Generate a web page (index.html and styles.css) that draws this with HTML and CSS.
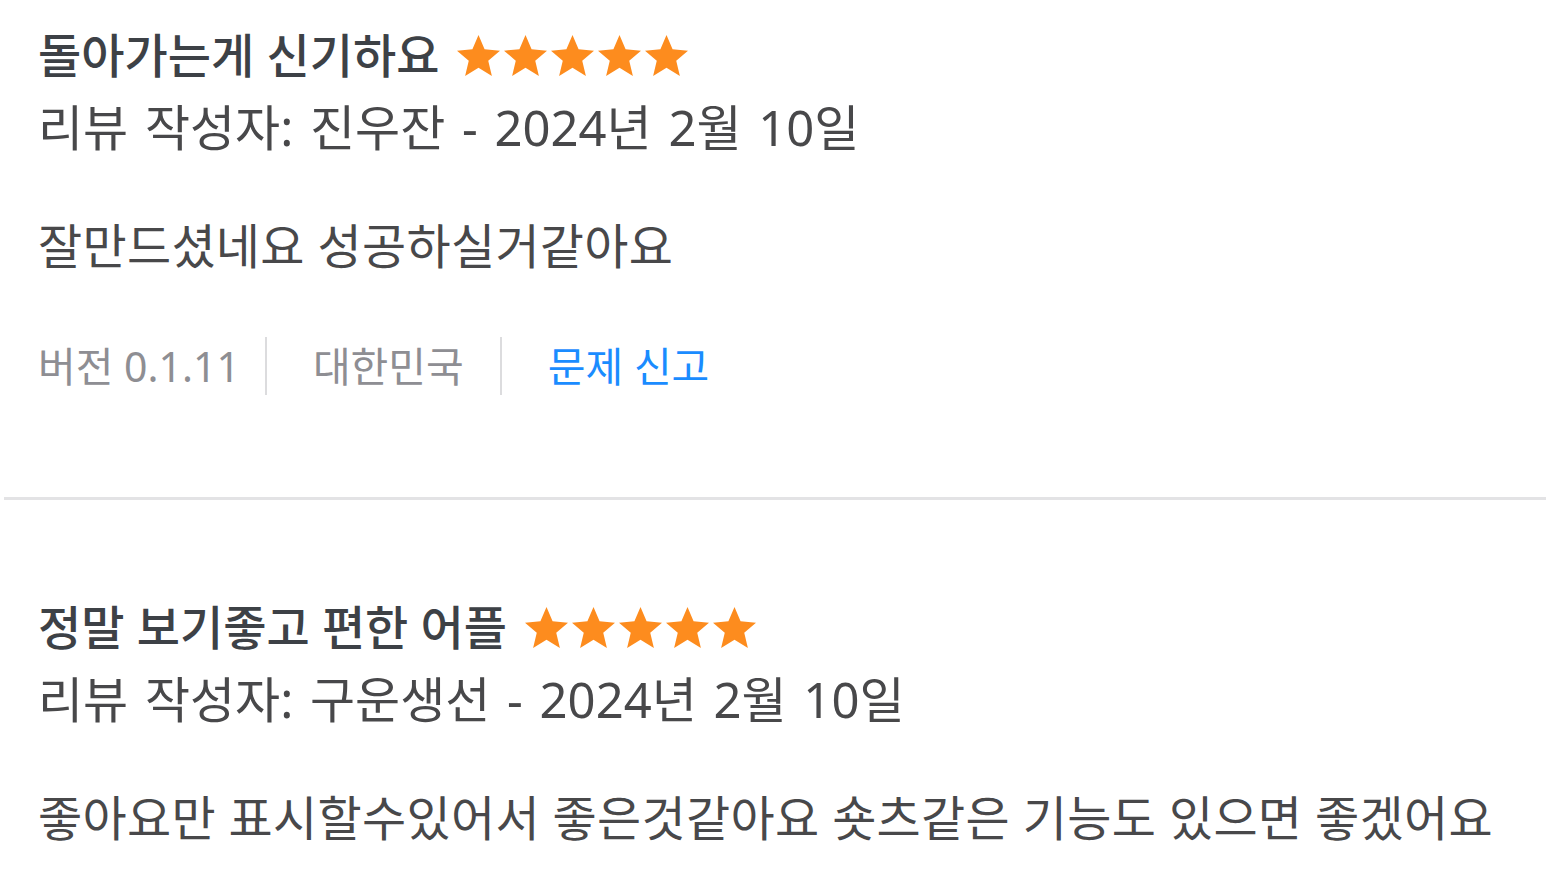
FILE: index.html
```html
<!DOCTYPE html>
<html lang="ko">
  <head>
    <meta charset="UTF-8" />
    <title>리뷰</title>
    <link rel="stylesheet" href="styles.css">
  </head>
  <body>
    <div class="reviews">
      <article class="review">
        <h2 class="review-title">
          돌아가는게 신기하요
          <span class="stars" aria-label="별점 5점">
            <svg viewBox="1.4 1.6 21.2 20.2"><path d="M12 1.6l3 7 7.6.7-5.8 5 1.8 7.5L12 17.8l-6.6 4 1.8-7.5-5.8-5 7.6-.7z"/></svg>
            <svg viewBox="1.4 1.6 21.2 20.2"><path d="M12 1.6l3 7 7.6.7-5.8 5 1.8 7.5L12 17.8l-6.6 4 1.8-7.5-5.8-5 7.6-.7z"/></svg>
            <svg viewBox="1.4 1.6 21.2 20.2"><path d="M12 1.6l3 7 7.6.7-5.8 5 1.8 7.5L12 17.8l-6.6 4 1.8-7.5-5.8-5 7.6-.7z"/></svg>
            <svg viewBox="1.4 1.6 21.2 20.2"><path d="M12 1.6l3 7 7.6.7-5.8 5 1.8 7.5L12 17.8l-6.6 4 1.8-7.5-5.8-5 7.6-.7z"/></svg>
            <svg viewBox="1.4 1.6 21.2 20.2"><path d="M12 1.6l3 7 7.6.7-5.8 5 1.8 7.5L12 17.8l-6.6 4 1.8-7.5-5.8-5 7.6-.7z"/></svg>
          </span>
        </h2>
        <p class="review-meta">리뷰 작성자: 진우잔 - 2024년 2월 10일</p>
        <p class="review-body">잘만드셨네요 성공하실거같아요</p>
        <div class="review-footer">
          <span>버전 0.1.11</span>
          <span>대한민국</span>
          <a href="#">문제 신고</a>
        </div>
      </article>
      <article class="review">
        <h2 class="review-title">
          정말 보기좋고 편한 어플
          <span class="stars" aria-label="별점 5점">
            <svg viewBox="1.4 1.6 21.2 20.2"><path d="M12 1.6l3 7 7.6.7-5.8 5 1.8 7.5L12 17.8l-6.6 4 1.8-7.5-5.8-5 7.6-.7z"/></svg>
            <svg viewBox="1.4 1.6 21.2 20.2"><path d="M12 1.6l3 7 7.6.7-5.8 5 1.8 7.5L12 17.8l-6.6 4 1.8-7.5-5.8-5 7.6-.7z"/></svg>
            <svg viewBox="1.4 1.6 21.2 20.2"><path d="M12 1.6l3 7 7.6.7-5.8 5 1.8 7.5L12 17.8l-6.6 4 1.8-7.5-5.8-5 7.6-.7z"/></svg>
            <svg viewBox="1.4 1.6 21.2 20.2"><path d="M12 1.6l3 7 7.6.7-5.8 5 1.8 7.5L12 17.8l-6.6 4 1.8-7.5-5.8-5 7.6-.7z"/></svg>
            <svg viewBox="1.4 1.6 21.2 20.2"><path d="M12 1.6l3 7 7.6.7-5.8 5 1.8 7.5L12 17.8l-6.6 4 1.8-7.5-5.8-5 7.6-.7z"/></svg>
          </span>
        </h2>
        <p class="review-meta">리뷰 작성자: 구운생선 - 2024년 2월 10일</p>
        <p class="review-body">좋아요만 표시할수있어서 좋은것같아요 숏츠같은 기능도 있으면 좋겠어요</p>
      </article>
    </div>
  </body>
</html>
```

FILE: styles.css
```css
* {
  margin: 0;
  padding: 0;
  box-sizing: border-box;
}

body {
  font-family: "Noto Sans", "Noto Sans CJK KR", sans-serif;
  background-color: #fff;
  color: #48484a;
  overflow: hidden;
}

.reviews {
  padding-left: 4px;
}

.review {
  padding: 31px 0 0 34px;
}

.review + .review {
  border-top: 3px solid #e3e3e5;
  padding-top: 103px;
}

.review-title {
  display: flex;
  align-items: center;
  gap: 18px;
  height: 48px;
  font-size: 47px;
  font-weight: 500;
  line-height: 48px;
  color: #3d4146;
}

.stars {
  display: flex;
  gap: 4px;
}

.stars svg {
  width: 43px;
  height: 41px;
  fill: #fd8c1e;
}

.review-meta {
  margin-top: 24px;
  font-size: 49px;
  font-weight: 400;
  line-height: 48px;
  word-spacing: 4px;
  color: #48484a;
}

.review-body {
  margin-top: 71px;
  font-size: 48px;
  font-weight: 400;
  line-height: 48px;
  letter-spacing: 0.3px;
  color: #48484a;
}

.review-footer {
  display: flex;
  align-items: center;
  margin-top: 67px;
  padding-bottom: 102px;
  font-size: 41px;
  line-height: 58px;
  color: #8e8e93;
}

.review-footer > * {
  padding: 0 36px 0 46px;
  border-left: 2px solid #dcdcde;
}

.review-footer > :first-child {
  padding: 0 25px 0 0;
  border-left: 0;
}

.review-footer a {
  color: #1a8cff;
  text-decoration: none;
}
```
